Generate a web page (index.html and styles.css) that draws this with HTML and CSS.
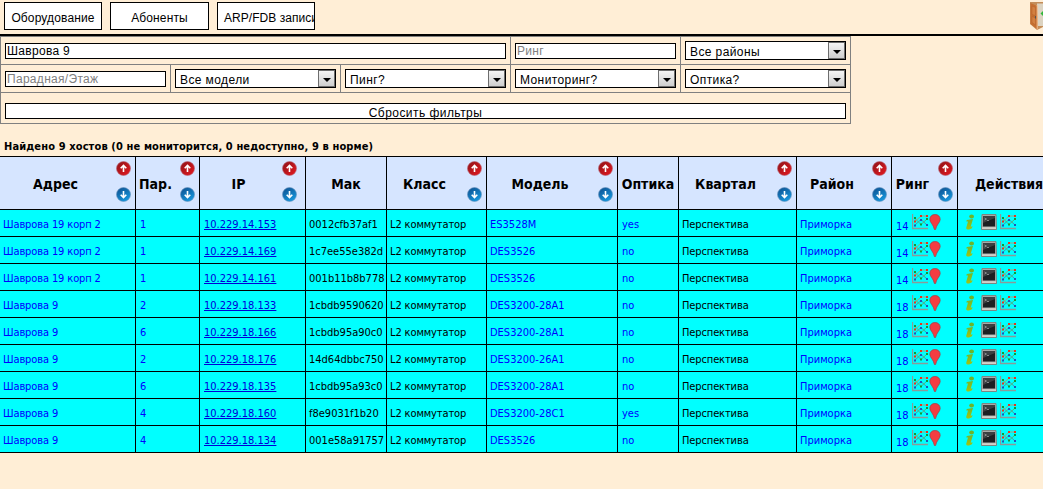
FILE: index.html
```html
<!DOCTYPE html>
<html lang="ru">
<head>
<meta charset="utf-8">
<title>Оборудование</title>
<link rel="stylesheet" href="styles.css">
</head>
<body>
<svg class="defs" width="0" height="0">
<defs>
<linearGradient id="red" x1="0" y1="0" x2="1" y2="1"><stop offset="0" stop-color="#8c1318"/><stop offset="1" stop-color="#e81820"/></linearGradient>
<linearGradient id="blue" x1="0" y1="0" x2="0.6" y2="1"><stop offset="0" stop-color="#0d4c8c"/><stop offset="1" stop-color="#1596dc"/></linearGradient>
<linearGradient id="green" x1="0" y1="0" x2="0" y2="1"><stop offset="0" stop-color="#72b82c"/><stop offset="1" stop-color="#a4c410"/></linearGradient>
</defs>
<symbol id="up" viewBox="0 0 15 15"><circle cx="7.5" cy="7.5" r="7" fill="url(#red)" stroke="#b76a78" stroke-width=".6"/><path d="M7.5 11V4.6M4.7 7.2L7.5 4.4L10.3 7.2" fill="none" stroke="#fff" stroke-width="1.6"/></symbol>
<symbol id="down" viewBox="0 0 15 15"><circle cx="7.5" cy="7.5" r="7" fill="url(#blue)" stroke="#6b94bd" stroke-width=".6"/><path d="M7.5 4V10.4M4.7 7.8L7.5 10.6L10.3 7.8" fill="none" stroke="#fff" stroke-width="1.6"/></symbol>
<symbol id="chart" viewBox="0 0 16 16"><path d="M.5 0V14.5H16" fill="none" stroke="#8b9a98" stroke-width="1.3"/><path d="M2.5 11.5L9 5.5L15 11" fill="none" stroke="#5a8c94" stroke-width=".9"/><path d="M2.5 4L9 10.5L15 5" fill="none" stroke="#5cae68" stroke-width=".9"/><path d="M2.5 8L9 2H15" fill="none" stroke="#b89868" stroke-width=".9"/><path d="M2 6.5h2v2H2zM8 1h2v2H8zM14 1h2v2h-2z" fill="#e8321c"/><path d="M2 3h2v2H2zM8 9.5h2v2H8zM14 4h2v2h-2z" fill="#149a34"/><path d="M2 10.5h2v2H2zM8 5h2v2H8zM14 10h2v2h-2z" fill="#2454b8"/></symbol>
<symbol id="pin" viewBox="0 0 12 16"><path d="M6 .5C2.8.5.8 2.6.8 5.4C.8 8.3 4.6 10.8 5.4 15.5H6.6C7.4 10.8 11.2 8.3 11.2 5.4C11.2 2.6 9.2.5 6 .5Z" fill="#f33d42" stroke="#9e4148" stroke-width=".7"/></symbol>
<symbol id="info" viewBox="0 0 10 16"><ellipse cx="6.6" cy="2.4" rx="2.4" ry="2" fill="#6db52a"/><path d="M1.8 6L8 5.1L5.7 12.8L7.6 12.3L7 14C4.8 16 .7 16.2 1.3 13.4L3 7.5L1.3 7.6Z" fill="url(#green)"/></symbol>
<symbol id="term" viewBox="0 0 16 16"><path d="M1 .5H15L15.5 15.5H.5Z" fill="#a7aaa7" stroke="#7b8783"/><path d="M2 2H14V12.5H2Z" fill="#1c2022"/><path d="M2 2H14V4L2 9Z" fill="#3b4041"/><path d="M3.5 4L5.5 5L3.5 6M6 6.5H8" fill="none" stroke="#bbb" stroke-width=".6"/><path d="M1 13.2H15V15H1Z" fill="#d0d1ca"/></symbol>
</svg>
<header class="topbar">
<nav class="nav"><a class="tab t1">Оборудование</a><a class="tab t2">Абоненты</a><a class="tab t3">ARP/FDB записи</a></nav>
<svg class="door" viewBox="0 0 13 28"><path d="M0 0H13V25L7 28L0 22Z" fill="#c48d58"/><path d="M7 1.5H13V24H8Z" fill="#dcd3c1"/><path d="M.5 1L7 4L7.5 27.5L.5 22Z" fill="#c66f30"/><path d="M2 4L5.5 5.5V13.5L2 12.5ZM2 14.5L5.5 16V23L2 20.5Z" fill="#d28040" stroke="#b5622b" stroke-width=".5"/><path d="M7.2 3V27.5" stroke="#f3c294"/><path d="M5.5 14V16.5" stroke="#555"/><path d="M10.5 11.5L13 9V14Z" fill="#32b83c"/></svg>
</header>
<form class="filters">
<div class="f wide"><input class="field" value="Шаврова 9"></div>
<div class="f"><input class="field" placeholder="Ринг"></div>
<div class="f"><div class="select"><span>Все районы</span><i></i></div></div>
<div class="f"><input class="field" placeholder="Парадная/Этаж"></div>
<div class="f"><div class="select"><span>Все модели</span><i></i></div></div>
<div class="f"><div class="select"><span>Пинг?</span><i></i></div></div>
<div class="f"><div class="select"><span>Мониторинг?</span><i></i></div></div>
<div class="f"><div class="select"><span>Оптика?</span><i></i></div></div>
<div class="f reset"><button type="button" class="field">Сбросить фильтры</button></div>
</form>
<p class="summary">Найдено 9 хостов (0 не мониторится, 0 недоступно, 9 в норме)</p>
<table class="hosts">
<colgroup><col class="c1"><col class="c2"><col class="c3"><col class="c4"><col class="c5"><col class="c6"><col class="c7"><col class="c8"><col class="c9"><col class="c10"><col class="c11"></colgroup>
<thead><tr>
<th><div class="h"><b>Адрес</b><span class="sort"><svg><use href="#up"/></svg><svg><use href="#down"/></svg></span></div></th>
<th><div class="h"><b>Пар.</b><span class="sort"><svg><use href="#up"/></svg><svg><use href="#down"/></svg></span></div></th>
<th><div class="h ip"><b>IP</b><span class="sort"><svg><use href="#up"/></svg><svg><use href="#down"/></svg></span></div></th>
<th><div class="h solo"><b>Мак</b></div></th>
<th><div class="h"><b>Класс</b><span class="sort"><svg><use href="#up"/></svg><svg><use href="#down"/></svg></span></div></th>
<th><div class="h"><b>Модель</b><span class="sort"><svg><use href="#up"/></svg><svg><use href="#down"/></svg></span></div></th>
<th><div class="h solo"><b>Оптика</b></div></th>
<th><div class="h"><b>Квартал</b><span class="sort"><svg><use href="#up"/></svg><svg><use href="#down"/></svg></span></div></th>
<th><div class="h"><b>Район</b><span class="sort"><svg><use href="#up"/></svg><svg><use href="#down"/></svg></span></div></th>
<th><div class="h"><b>Ринг</b><span class="sort"><svg><use href="#up"/></svg><svg><use href="#down"/></svg></span></div></th>
<th><div class="h actions"><b>Действия</b></div></th>
</tr></thead>
<tbody>
<tr><td>Шаврова 19 корп 2</td><td>1</td><td><a>10.229.14.153</a></td><td>0012cfb37af1</td><td>L2 коммутатор</td><td>ES3528M</td><td>yes</td><td>Перспектива</td><td>Приморка</td><td><div class="ring"><span>14</span><svg class="ch"><use href="#chart"/></svg><svg class="pin"><use href="#pin"/></svg></div></td><td><div class="act"><svg class="inf"><use href="#info"/></svg><svg class="term"><use href="#term"/></svg><svg class="ch"><use href="#chart"/></svg></div></td></tr>
<tr><td>Шаврова 19 корп 2</td><td>1</td><td><a>10.229.14.169</a></td><td>1c7ee55e382d</td><td>L2 коммутатор</td><td>DES3526</td><td>no</td><td>Перспектива</td><td>Приморка</td><td><div class="ring"><span>14</span><svg class="ch"><use href="#chart"/></svg><svg class="pin"><use href="#pin"/></svg></div></td><td><div class="act"><svg class="inf"><use href="#info"/></svg><svg class="term"><use href="#term"/></svg><svg class="ch"><use href="#chart"/></svg></div></td></tr>
<tr><td>Шаврова 19 корп 2</td><td>1</td><td><a>10.229.14.161</a></td><td>001b11b8b778</td><td>L2 коммутатор</td><td>DES3526</td><td>no</td><td>Перспектива</td><td>Приморка</td><td><div class="ring"><span>14</span><svg class="ch"><use href="#chart"/></svg><svg class="pin"><use href="#pin"/></svg></div></td><td><div class="act"><svg class="inf"><use href="#info"/></svg><svg class="term"><use href="#term"/></svg><svg class="ch"><use href="#chart"/></svg></div></td></tr>
<tr><td>Шаврова 9</td><td>2</td><td><a>10.229.18.133</a></td><td>1cbdb9590620</td><td>L2 коммутатор</td><td>DES3200-28A1</td><td>no</td><td>Перспектива</td><td>Приморка</td><td><div class="ring"><span>18</span><svg class="ch"><use href="#chart"/></svg><svg class="pin"><use href="#pin"/></svg></div></td><td><div class="act"><svg class="inf"><use href="#info"/></svg><svg class="term"><use href="#term"/></svg><svg class="ch"><use href="#chart"/></svg></div></td></tr>
<tr><td>Шаврова 9</td><td>6</td><td><a>10.229.18.166</a></td><td>1cbdb95a90c0</td><td>L2 коммутатор</td><td>DES3200-28A1</td><td>no</td><td>Перспектива</td><td>Приморка</td><td><div class="ring"><span>18</span><svg class="ch"><use href="#chart"/></svg><svg class="pin"><use href="#pin"/></svg></div></td><td><div class="act"><svg class="inf"><use href="#info"/></svg><svg class="term"><use href="#term"/></svg><svg class="ch"><use href="#chart"/></svg></div></td></tr>
<tr><td>Шаврова 9</td><td>2</td><td><a>10.229.18.176</a></td><td>14d64dbbc750</td><td>L2 коммутатор</td><td>DES3200-26A1</td><td>no</td><td>Перспектива</td><td>Приморка</td><td><div class="ring"><span>18</span><svg class="ch"><use href="#chart"/></svg><svg class="pin"><use href="#pin"/></svg></div></td><td><div class="act"><svg class="inf"><use href="#info"/></svg><svg class="term"><use href="#term"/></svg><svg class="ch"><use href="#chart"/></svg></div></td></tr>
<tr><td>Шаврова 9</td><td>6</td><td><a>10.229.18.135</a></td><td>1cbdb95a93c0</td><td>L2 коммутатор</td><td>DES3200-28A1</td><td>no</td><td>Перспектива</td><td>Приморка</td><td><div class="ring"><span>18</span><svg class="ch"><use href="#chart"/></svg><svg class="pin"><use href="#pin"/></svg></div></td><td><div class="act"><svg class="inf"><use href="#info"/></svg><svg class="term"><use href="#term"/></svg><svg class="ch"><use href="#chart"/></svg></div></td></tr>
<tr><td>Шаврова 9</td><td>4</td><td><a>10.229.18.160</a></td><td>f8e9031f1b20</td><td>L2 коммутатор</td><td>DES3200-28C1</td><td>yes</td><td>Перспектива</td><td>Приморка</td><td><div class="ring"><span>18</span><svg class="ch"><use href="#chart"/></svg><svg class="pin"><use href="#pin"/></svg></div></td><td><div class="act"><svg class="inf"><use href="#info"/></svg><svg class="term"><use href="#term"/></svg><svg class="ch"><use href="#chart"/></svg></div></td></tr>
<tr><td>Шаврова 9</td><td>4</td><td><a>10.229.18.134</a></td><td>001e58a91757</td><td>L2 коммутатор</td><td>DES3526</td><td>no</td><td>Перспектива</td><td>Приморка</td><td><div class="ring"><span>18</span><svg class="ch"><use href="#chart"/></svg><svg class="pin"><use href="#pin"/></svg></div></td><td><div class="act"><svg class="inf"><use href="#info"/></svg><svg class="term"><use href="#term"/></svg><svg class="ch"><use href="#chart"/></svg></div></td></tr>
</tbody>
</table>
</body>
</html>
```

FILE: styles.css
```css
* { box-sizing: border-box; }
html { overflow: hidden; }
body { margin: 0; height: 489px; overflow: hidden; background: #ffeed6; color: #000; font-family: "DejaVu Sans Condensed", "DejaVu Sans", sans-serif; font-size: 11px; }
.defs { display: block; height: 0; }
.topbar { height: 36px; border-bottom: 2px solid #000; display: flex; justify-content: space-between; padding: 2px 0 0 4px; }
.nav { display: flex; gap: 8px; }
.tab { width: 98px; height: 28px; border: 1px solid #000; background: #fff; font: 12px/30px "Liberation Sans", sans-serif; letter-spacing: .13px; text-align: center; white-space: nowrap; overflow: hidden; }
.t2 { width: 99px; }
.t3 { text-align: left; padding-left: 6px; letter-spacing: .05px; }
.door { width: 13px; height: 28px; }

.filters { width: 851px; display: grid; grid-template-columns: repeat(5, 170px); grid-template-rows: 28px 28px 31px; border: solid #808080; border-width: 1px 0 0 1px; font: 12px "Liberation Sans", sans-serif; letter-spacing: .4px; }
.f { border: solid #808080; border-width: 0 1px 1px 0; padding: 0 4px; display: flex; align-items: center; }
.wide { grid-column: span 3; }
.reset { grid-column: 1 / -1; align-items: flex-end; padding-bottom: 4px; }
.field { width: 100%; height: 16px; border: 1px solid #000; border-radius: 0; background: #fff; color: #000; padding: 1px 1px 0; margin: 0; font: inherit; line-height: 13px; outline: none; letter-spacing: .3px; }
.reset .field { padding-top: 3px; letter-spacing: .45px; }
.field::placeholder { color: #808080; opacity: 1; }
.select { width: 100%; height: 19px; border: 1px solid #000; background: #fff; display: flex; justify-content: space-between; padding-left: 4px; line-height: 20px; }
.select i { width: 17px; height: 17px; border: 1px solid #6d6d6d; background: linear-gradient(#f4f4f4, #cfcfcf); display: flex; align-items: center; justify-content: center; }
.select i::after { content: ""; border: 4px solid transparent; border-top-color: #000; border-bottom: 0; margin-top: 2px; }

.summary { margin: 0; height: 32px; padding: 16px 0 0 4px; font-weight: bold; font-size: 11px; line-height: 14px; letter-spacing: .12px; white-space: nowrap; }

.hosts { width: 1077px; table-layout: fixed; border-collapse: separate; border-spacing: 0; border-top: 1px solid #000; }
.c1 { width: 136px; } .c2 { width: 64px; } .c3 { width: 106px; } .c4 { width: 81px; }
.c5 { width: 100px; } .c6 { width: 131px; } .c7 { width: 61px; } .c8 { width: 118px; }
.c9 { width: 95px; } .c10 { width: 66px; } .c11 { width: 119px; }
.hosts th, .hosts td { border: solid #000; border-width: 0 1px 1px 0; padding: 0; white-space: nowrap; }
.hosts th { height: 53px; background: #d6e5ff; font-size: 14px; }
.hosts td { height: 27px; background: #0ff; text-align: left; padding: 2px 0 0 3px; }
.hosts td:nth-child(1), .hosts td:nth-child(5), .hosts td:nth-child(8) { letter-spacing: -.12px; }
.h { display: flex; align-items: center; height: 52px; padding-right: 4px; }
.h b { flex: 1; text-align: center; padding: 1px 5px 0 0; }
.h.ip { padding-right: 8px; }
.h.solo { padding-right: 0; }
.h.solo b { padding-right: 0; }
.h.actions { padding-right: 11px; }
.sort { display: flex; flex-direction: column; gap: 11px; padding-bottom: 3px; }
.sort svg { width: 15px; height: 15px; display: block; }
.hosts td:nth-child(1), .hosts td:nth-child(2), .hosts td:nth-child(6), .hosts td:nth-child(7), .hosts td:nth-child(9), .hosts td:nth-child(10), .hosts a { color: #00f; }
.hosts a { text-decoration: underline; color: #0000d8; }
.hosts td:nth-child(2), .hosts td:nth-child(3), .hosts td:nth-child(7) { padding-left: 4px; }
.hosts td:nth-child(10), .hosts td:nth-child(11) { padding-top: 0; }
.ring, .act { display: flex; height: 18px; }
.ring { padding-left: 1px; }
.ring span { width: 14px; padding-top: 6px; line-height: 13px; margin-right: 2px; }
.ch { width: 16px; height: 16px; }
.pin { width: 12px; height: 16px; margin-left: 1px; }
.act { padding-left: 4px; }
.inf { width: 10px; height: 16px; }
.term { width: 16px; height: 16px; margin: 0 3px 0 6px; }
```
